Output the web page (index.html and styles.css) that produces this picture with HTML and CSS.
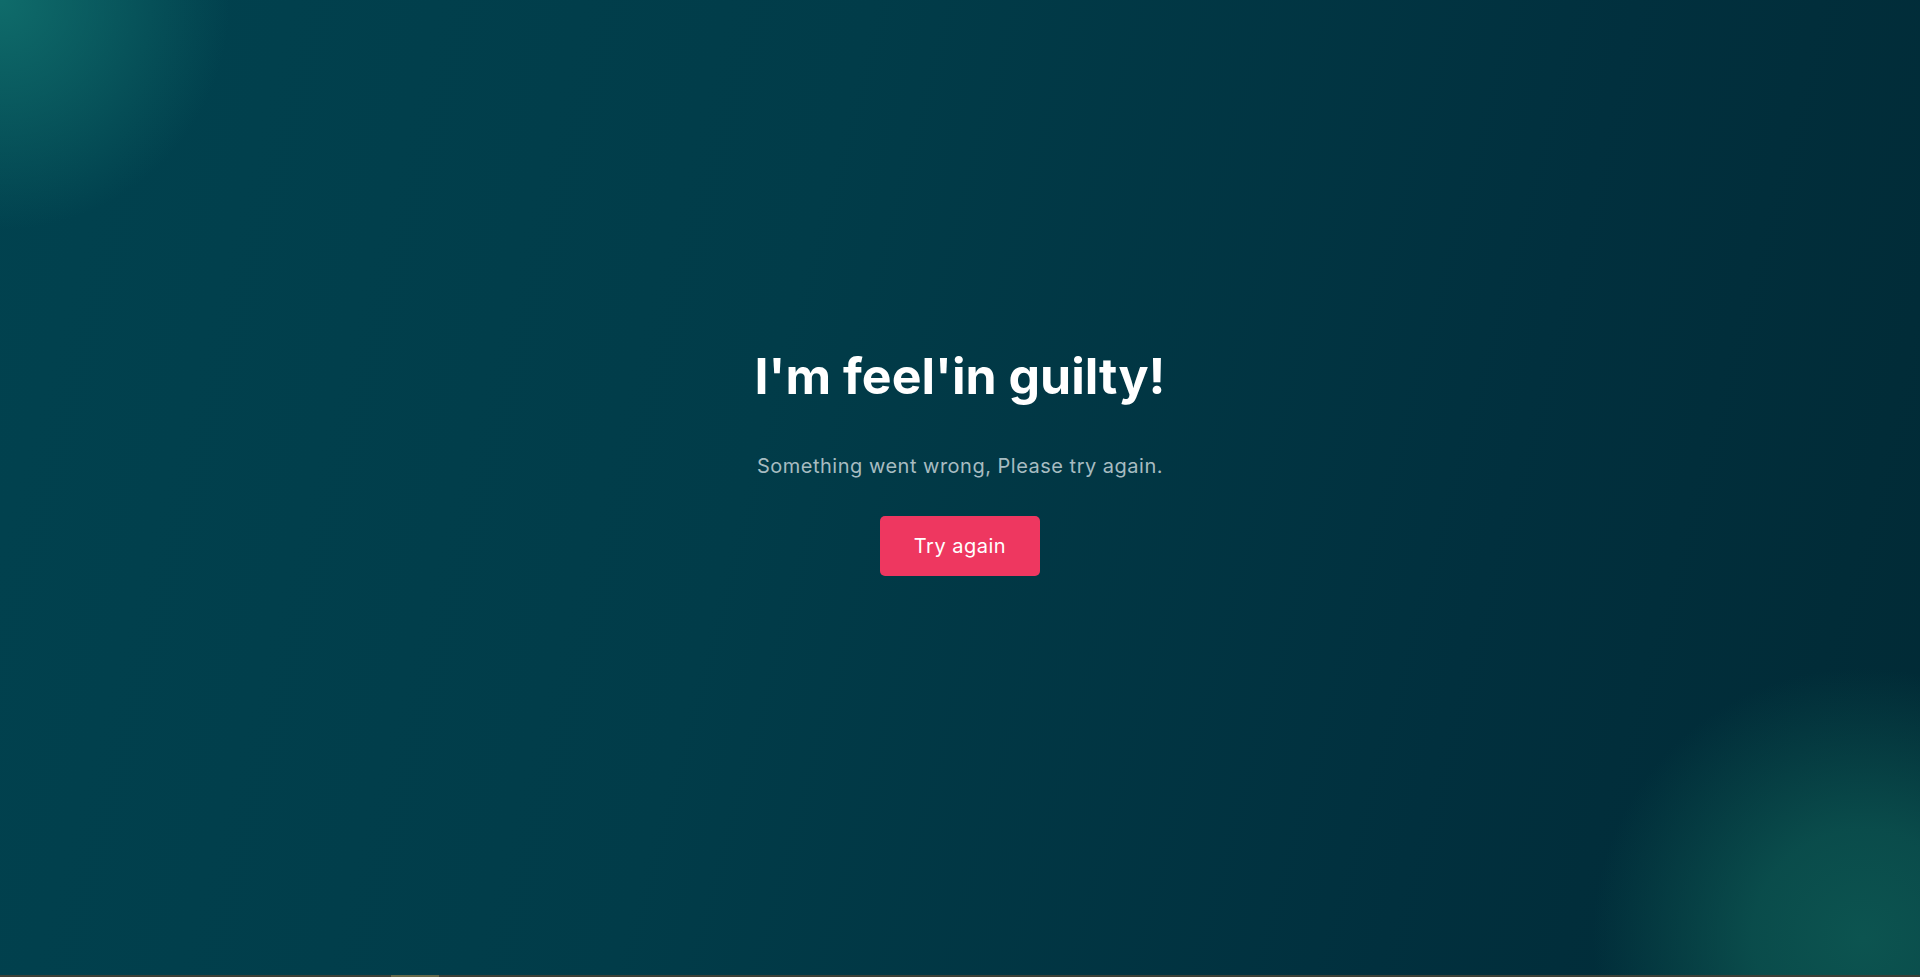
FILE: index.html
```html
<!DOCTYPE html>
<html lang="en">
<head>
<meta charset="utf-8">
<title>Error</title>
<link rel="stylesheet" href="styles.css">
</head>
<body>
<main class="page">
  <section class="error">
    <h1 class="error-title">I'm feel'in guilty!</h1>
    <p class="error-text">Something went wrong, Please try again.</p>
    <button class="error-btn" type="button">Try again</button>
  </section>
</main>
<div class="bottom-bar"><span class="bottom-thumb"></span></div>
</body>
</html>
```

FILE: styles.css
```css
html, body {
  margin: 0;
  padding: 0;
  height: 100%;
}
body {
  font-family: Inter, "Open Sans", sans-serif;
  background-color: #013644;
  background-image:
    radial-gradient(circle at 0 0, rgba(16, 110, 108, 0.95) 0, rgba(16, 110, 108, 0.55) 100px, rgba(16, 110, 108, 0) 230px),
    radial-gradient(circle at 97% 96%, rgba(12, 84, 80, 1) 0, rgba(12, 84, 80, 0.8) 110px, rgba(12, 84, 80, 0) 270px),
    linear-gradient(105deg, #01424f 0%, #013c49 40%, #01303e 75%, #012a35 100%);
  display: flex;
  flex-direction: column;
  overflow: hidden;
}
.page {
  flex: 1;
  display: flex;
  align-items: center;
  justify-content: center;
  padding-bottom: 54px;
}
.error {
  display: flex;
  flex-direction: column;
  align-items: center;
  text-align: center;
}
.error-title {
  margin: 0;
  color: #ffffff;
  font-size: 50px;
  font-weight: 700;
  line-height: 1.2;
  letter-spacing: 0;
}
.error-text {
  margin: 45px 0 0;
  color: #a7bcc1;
  font-size: 20px;
  line-height: 1.5;
  letter-spacing: 0.5px;
}
.error-btn {
  margin-top: 35px;
  width: 160px;
  height: 60px;
  border: 0;
  border-radius: 5px;
  background: #ee3760;
  color: #ffffff;
  font-family: inherit;
  font-size: 20px;
  letter-spacing: 0.5px;
  cursor: pointer;
}
.bottom-bar {
  height: 2px;
  background: #3c4036;
  position: relative;
  flex: none;
}
.bottom-thumb {
  position: absolute;
  left: 391px;
  top: 0;
  width: 48px;
  height: 2px;
  background: #676848;
}
```
